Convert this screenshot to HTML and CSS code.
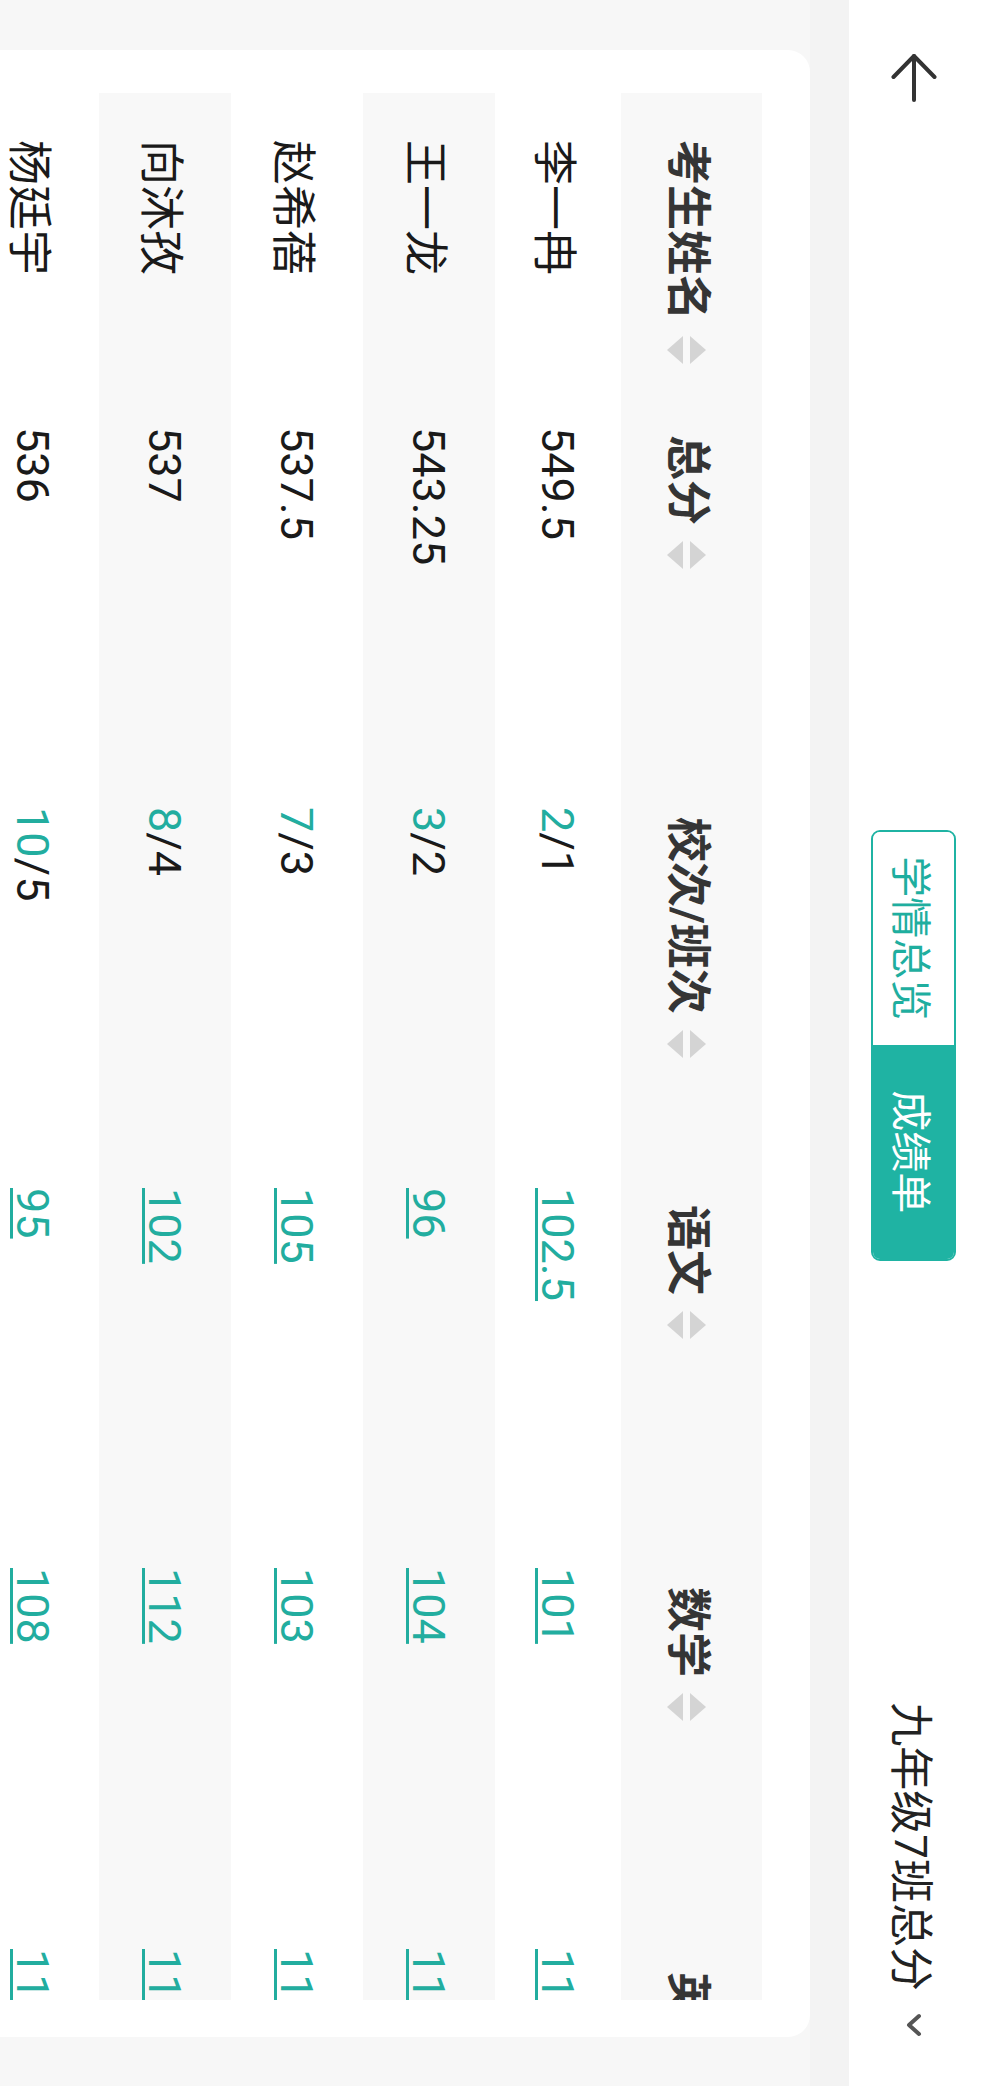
FILE: index.html
```html
<!DOCTYPE html>
<html lang="zh-CN">
<head>
<meta charset="utf-8">
<title>成绩单</title>
<link rel="stylesheet" href="styles.css">
</head>
<body>
<div class="screen">
  <header class="topbar">
    <div class="back">
      <svg width="50" height="46" viewBox="0 0 50 46" fill="none" stroke="#333" stroke-width="4" stroke-linecap="round" stroke-linejoin="round"><path d="M3 23H47"/><path d="M24 2.5L3 23L24 43.5"/></svg>
    </div>
    <div class="tabs">
      <span class="tab">学情总览</span>
      <span class="tab active">成绩单</span>
    </div>
    <div class="title">
      <span>九年级7班总分</span>
      <svg class="chev" width="24" height="16" viewBox="0 0 24 16" fill="none" stroke="#555" stroke-width="4" stroke-linecap="round" stroke-linejoin="round"><path d="M3 3L12 13L21 3"/></svg>
    </div>
  </header>
  <div class="strip"></div>
  <main class="main">
    <section class="card">
      <div class="table">
        <div class="thead">
          <div class="th">考生姓名<i class="sort"><b class="up"></b><b class="down"></b></i></div>
          <div class="th">总分<i class="sort"><b class="up"></b><b class="down"></b></i></div>
          <div class="th">校次/班次<i class="sort"><b class="up"></b><b class="down"></b></i></div>
          <div class="th">语文<i class="sort"><b class="up"></b><b class="down"></b></i></div>
          <div class="th">数学<i class="sort"><b class="up"></b><b class="down"></b></i></div>
          <div class="th">英语<i class="sort"><b class="up"></b><b class="down"></b></i></div>
        </div>
        <div class="row">
          <div class="td name">李一冉</div>
          <div class="td">549.5</div>
          <div class="td"><span class="hl">2</span>/1</div>
          <div class="td"><a class="link">102.5</a></div>
          <div class="td"><a class="link">101</a></div>
          <div class="td"><a class="link">115</a></div>
        </div>
        <div class="row alt">
          <div class="td name">王一龙</div>
          <div class="td">543.25</div>
          <div class="td"><span class="hl">3</span>/2</div>
          <div class="td"><a class="link">96</a></div>
          <div class="td"><a class="link">104</a></div>
          <div class="td"><a class="link">117</a></div>
        </div>
        <div class="row">
          <div class="td name">赵希蓓</div>
          <div class="td">537.5</div>
          <div class="td"><span class="hl">7</span>/3</div>
          <div class="td"><a class="link">105</a></div>
          <div class="td"><a class="link">103</a></div>
          <div class="td"><a class="link">110</a></div>
        </div>
        <div class="row alt">
          <div class="td name">向沐孜</div>
          <div class="td">537</div>
          <div class="td"><span class="hl">8</span>/4</div>
          <div class="td"><a class="link">102</a></div>
          <div class="td"><a class="link">112</a></div>
          <div class="td"><a class="link">113</a></div>
        </div>
        <div class="row">
          <div class="td name">杨廷宇</div>
          <div class="td">536</div>
          <div class="td"><span class="hl">10</span>/5</div>
          <div class="td"><a class="link">95</a></div>
          <div class="td"><a class="link">108</a></div>
          <div class="td"><a class="link">119</a></div>
        </div>
      </div>
    </section>
  </main>
</div>
</body>
</html>
```
FILE: styles.css
```css
html, body {
  margin: 0;
  padding: 0;
  width: 991px;
  height: 2086px;
  overflow: hidden;
  background: #f7f7f7;
}

.screen {
  width: 2086px;
  height: 991px;
  transform-origin: 0 0;
  transform: translateX(991px) rotate(90deg);
  display: flex;
  flex-direction: column;
  background: #f7f7f7;
  font-family: Roboto, "Noto Sans CJK SC", sans-serif;
  color: #1a1a1a;
  overflow: hidden;
}

.topbar {
  flex: 0 0 142px;
  box-sizing: border-box;
  height: 142px;
  padding: 12px 49px 0 53px;
  background: #fff;
  display: grid;
  grid-template-columns: 1fr auto 1fr;
  align-items: center;
}

.back {
  display: flex;
  align-items: center;
}

.tabs {
  display: flex;
  box-sizing: border-box;
  height: 85px;
  border: 2px solid #1fb3a3;
  border-radius: 9px;
  overflow: hidden;
}

.tab {
  width: 213.5px;
  display: flex;
  align-items: center;
  justify-content: center;
  font-size: 41px;
  color: #1fae9f;
  background: #fff;
}

.tab.active {
  background: #1fb3a3;
  color: #fff;
}

.title {
  justify-self: end;
  display: flex;
  align-items: center;
  gap: 22px;
  font-size: 44px;
  color: #222;
}

.strip {
  flex: 0 0 39px;
  background: #f3f3f3;
}

.main {
  flex: 1;
  min-height: 0;
  padding: 0 49px 0 50px;
  background: #f7f7f7;
}

.card {
  box-sizing: border-box;
  height: 100%;
  background: #fff;
  border-radius: 22px 22px 0 0;
  padding: 48px 37px 0 43px;
}

.table {
  width: 1907px;
  overflow: hidden;
}

.thead {
  display: grid;
  grid-template-columns: 295px 382px 388px 382px 385px 380px;
  height: 141px;
  align-items: center;
  background: #f8f8f8;
}

.th {
  display: flex;
  align-items: center;
  gap: 16px;
  padding-left: 47px;
  font-size: 45px;
  font-weight: 700;
  color: #353535;
  white-space: nowrap;
}

.sort {
  display: flex;
  flex-direction: column;
  gap: 7px;
  margin-top: 10px;
}

.sort b {
  display: block;
  width: 0;
  height: 0;
  border-left: 14.5px solid transparent;
  border-right: 14.5px solid transparent;
}

.sort .up {
  border-bottom: 16px solid #d4d4d4;
}

.sort .down {
  border-top: 16px solid #d4d4d4;
}

.row {
  display: grid;
  grid-template-columns: 287px 380px 381px 380px 381px 380px;
  height: 132px;
  align-items: center;
  background: #fff;
}

.thead + .row {
  height: 126px;
}

.row.alt {
  background: #f8f8f8;
}

.td {
  padding-left: 47px;
  font-size: 45px;
  color: #1a1a1a;
  white-space: nowrap;
}

.hl {
  color: #22ad9f;
}

.link {
  color: #22ad9f;
  text-decoration: underline;
  text-decoration-thickness: 3px;
  text-underline-offset: 4px;
}
```
